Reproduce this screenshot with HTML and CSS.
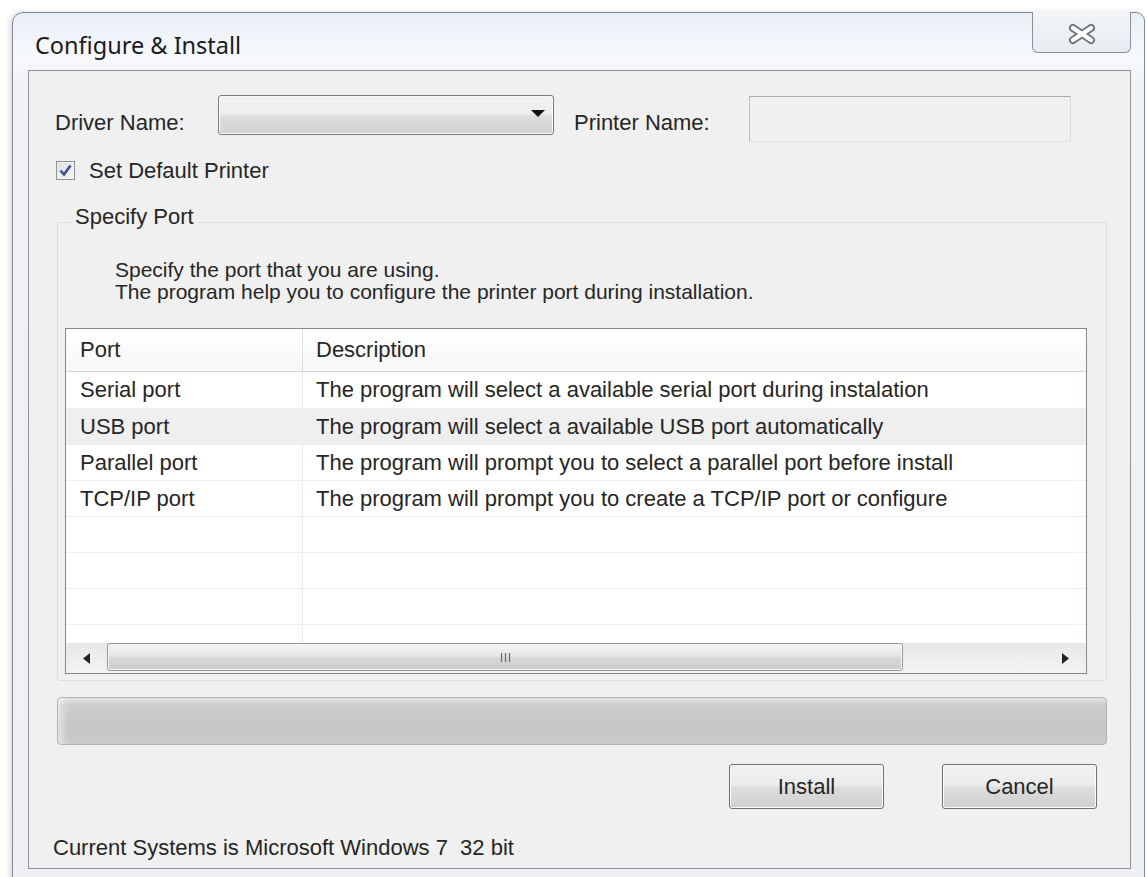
FILE: index.html
```html
<!DOCTYPE html>
<html lang="en">
<head>
<meta charset="utf-8">
<title>Configure &amp; Install</title>
<link rel="stylesheet" href="styles.css">
</head>
<body>
<div class="window">
  <div class="titlebar">
    <span class="title">Configure &amp; Install</span>
    <button class="close" type="button" aria-label="Close">
      <svg width="30" height="22" viewBox="0 0 30 22">
        <path d="M6 5 L24 17 M24 5 L6 17" stroke="#6f747a" stroke-width="8" stroke-linecap="round" fill="none"/>
        <path d="M6 5 L24 17 M24 5 L6 17" stroke="#fdfdfd" stroke-width="4.4" stroke-linecap="round" fill="none"/>
      </svg>
    </button>
  </div>

  <div class="client">
    <div class="names-row">
      <span class="label driver-label">Driver Name:</span>
      <div class="combo">
        <svg class="combo-arrow" width="14" height="7" viewBox="0 0 14 7"><path d="M0 0 H14 L7 7 Z" fill="#111"/></svg>
      </div>
      <span class="label printer-label">Printer Name:</span>
      <div class="textfield"></div>
    </div>

    <label class="check-row">
      <span class="checkbox">
        <svg width="15" height="15" viewBox="0 0 15 15"><path d="M2.5 7.5 L6 11.5 L12.5 2.5" stroke="#3f4f8c" stroke-width="2.6" fill="none"/></svg>
      </span>
      <span class="check-text">Set Default Printer</span>
    </label>

    <fieldset class="group">
      <legend>Specify Port</legend>
      <p class="intro">Specify the port that you are using.<br>The program help you to configure the printer port during installation.</p>
      <div class="listview">
        <div class="lv-head">
          <div class="cell c1">Port</div>
          <div class="cell c2">Description</div>
        </div>
        <div class="lv-row first">
          <div class="cell c1">Serial port</div>
          <div class="cell c2">The program will select a available serial port during instalation</div>
        </div>
        <div class="lv-row alt">
          <div class="cell c1">USB port</div>
          <div class="cell c2">The program will select a available USB port automatically</div>
        </div>
        <div class="lv-row">
          <div class="cell c1">Parallel port</div>
          <div class="cell c2">The program will prompt you to select a parallel port before install</div>
        </div>
        <div class="lv-row">
          <div class="cell c1">TCP/IP port</div>
          <div class="cell c2">The program will prompt you to create a TCP/IP port or configure</div>
        </div>
        <div class="lv-row"><div class="cell c1"></div><div class="cell c2"></div></div>
        <div class="lv-row"><div class="cell c1"></div><div class="cell c2"></div></div>
        <div class="lv-row"><div class="cell c1"></div><div class="cell c2"></div></div>
        <div class="lv-row filler"><div class="cell c1"></div><div class="cell c2"></div></div>
        <div class="hscroll">
          <div class="sb-btn">
            <svg width="7" height="11" viewBox="0 0 7 11"><path d="M7 0 V11 L0 5.5 Z" fill="#222"/></svg>
          </div>
          <div class="sb-thumb">
            <svg width="11" height="9" viewBox="0 0 11 9"><path d="M1.5 0 V9 M5.5 0 V9 M9.5 0 V9" stroke="#6a6a6a" stroke-width="1.2"/></svg>
          </div>
          <div class="sb-track"></div>
          <div class="sb-btn">
            <svg width="7" height="11" viewBox="0 0 7 11"><path d="M0 0 V11 L7 5.5 Z" fill="#222"/></svg>
          </div>
        </div>
      </div>
    </fieldset>

    <div class="progress"></div>

    <div class="buttons">
      <button class="btn" type="button">Install</button>
      <button class="btn" type="button">Cancel</button>
    </div>

    <div class="status">Current Systems is Microsoft Windows 7&nbsp; 32 bit</div>
  </div>
</div>
</body>
</html>
```

FILE: styles.css
```css
html, body {
  margin: 0;
  padding: 0;
}

body {
  width: 1147px;
  height: 877px;
  overflow: hidden;
  background: #ffffff;
  font-family: "Liberation Sans", Arial, sans-serif;
  font-size: 22px;
  color: #262626;
}

/* Dialog frame */
.window {
  box-sizing: border-box;
  width: 1133px;
  height: 890px;
  margin: 12px 0 0 12px;
  padding: 0 13px 0 15px;
  border: 1px solid #7f8893;
  border-radius: 11px 9px 0 0;
  background: linear-gradient(to bottom, #e9f0f7 0, #f7f9fc 45px, #f0f2f5 70px, #eef0f3 100%);
  box-shadow: -3px 0 5px rgba(0, 0, 0, 0.12);
}

.titlebar {
  display: flex;
  justify-content: space-between;
  align-items: flex-start;
  height: 57px;
}

.title {
  margin: 18px 0 0 7px;
  font-family: "Noto Sans", "Open Sans", sans-serif;
  font-size: 23.5px;
  line-height: 28px;
  color: #1b1b1b;
}

.close {
  box-sizing: border-box;
  width: 99px;
  height: 41px;
  margin-top: -1px;
  padding: 4px 0 0;
  border: 1px solid #8b9097;
  border-top: none;
  border-radius: 0 0 6px 6px;
  background: linear-gradient(to bottom, #f3f5f8, #e8ecf1);
  display: flex;
  align-items: center;
  justify-content: center;
}

/* Client area */
.client {
  background: #f0f0f0;
  border: 1px solid #8e949b;
  padding: 24px 23px 9px 28px;
}

.names-row {
  display: flex;
  align-items: flex-start;
}

.label {
  line-height: 24px;
  margin-top: 16px;
  white-space: nowrap;
}

.driver-label {
  width: 163px;
  margin-left: -2px;
}

.combo {
  box-sizing: border-box;
  width: 336px;
  height: 40px;
  border: 1px solid #7a7a7a;
  border-radius: 3px;
  background: linear-gradient(to bottom, #f3f3f3 0, #ececec 48%, #dedede 52%, #d2d2d2 100%);
  box-shadow: inset 0 0 0 1px #fafafa;
  display: flex;
  align-items: center;
  justify-content: flex-end;
  padding-right: 8px;
}

.combo-arrow {
  margin-top: -3px;
}

.printer-label {
  width: 175px;
  margin-left: 20px;
}

.textfield {
  box-sizing: border-box;
  width: 322px;
  height: 46px;
  margin-top: 1px;
  border: 1px solid;
  border-color: #a9a9a9 #dadada #e2e2e2 #bcbcbc;
  background: #f0f0f0;
}

.check-row {
  display: flex;
  align-items: center;
  height: 19px;
  margin: 19px 0 0 -1px;
}

.checkbox {
  box-sizing: border-box;
  width: 19px;
  height: 19px;
  border: 1px solid #8e8f8f;
  background: linear-gradient(135deg, #dcdfe6, #f6f7f9);
  box-shadow: inset 0 0 0 1px #f4f4f4;
  display: flex;
  align-items: center;
  justify-content: center;
}

.check-text {
  margin-left: 14px;
  line-height: 22px;
}

/* Group box */
.group {
  margin: 27px 0 0;
  padding: 0 19px 6px 7px;
  border: 1px solid #d5dfe5;
  border-radius: 3px;
  min-width: 0;
}

.group legend {
  margin-left: 7px;
  padding: 0 3px 10px;
  line-height: 20px;
}

.intro {
  margin: 22px 0 25px;
  padding-left: 50px;
  font-size: 21px;
  line-height: 22px;
}

/* List view */
.listview {
  box-sizing: border-box;
  width: 1022px;
  height: 346px;
  border: 1px solid #828790;
  background: #ffffff;
  display: flex;
  flex-direction: column;
}

.lv-head,
.lv-row {
  display: grid;
  grid-template-columns: 237px 1fr;
}

.lv-head {
  height: 43px;
  box-sizing: border-box;
  border-bottom: 1px solid #d6d6d6;
  background: linear-gradient(to bottom, #ffffff, #f6f7f8);
}

.lv-row {
  height: 36px;
  box-sizing: border-box;
  border-bottom: 1px solid #efefef;
}

.lv-row.first {
  height: 37px;
}

.lv-row.alt {
  background: #efefef;
}

.lv-row.filler {
  flex: 1;
  height: auto;
  border-bottom: none;
}

.cell {
  display: flex;
  align-items: center;
  white-space: nowrap;
}

.c1 {
  padding-left: 14px;
  border-right: 1px solid #ececec;
}

.lv-head .c1 {
  border-right-color: #e0e0e0;
}

.c2 {
  padding-left: 13px;
}

/* Horizontal scroll bar */
.hscroll {
  height: 30px;
  flex: none;
  display: flex;
  background: linear-gradient(to bottom, #e8e8e8, #f3f3f3);
}

.sb-btn {
  width: 41px;
  display: flex;
  align-items: center;
  justify-content: center;
}

.sb-thumb {
  box-sizing: border-box;
  width: 796px;
  height: 28px;
  border: 1px solid #979797;
  border-radius: 3px;
  background: linear-gradient(to bottom, #f6f6f6 0, #e6e6e6 45%, #d6d6d6 55%, #cdcdcd 100%);
  box-shadow: inset 0 0 0 1px #f5f5f5;
  display: flex;
  align-items: center;
  justify-content: center;
}

.sb-track {
  flex: 1;
}

/* Progress bar */
.progress {
  box-sizing: border-box;
  height: 48px;
  margin-top: 16px;
  border: 1px solid #b3b3b3;
  border-radius: 4px;
  background: linear-gradient(to bottom, #e2e2e2 0, #cdcdcd 7px, #c6c6c6 60%, #c9c9c9 100%);
  box-shadow: inset 12px 0 10px -8px rgba(255, 255, 255, 0.6);
}

/* Command buttons */
.buttons {
  display: flex;
  justify-content: flex-end;
  gap: 58px;
  margin: 19px 10px 0 0;
}

.btn {
  box-sizing: border-box;
  width: 155px;
  height: 45px;
  border: 1px solid #707070;
  border-radius: 3px;
  background: linear-gradient(to bottom, #f2f2f2 0, #ebebeb 48%, #dddddd 52%, #cfcfcf 100%);
  box-shadow: inset 0 0 0 1px #fbfbfb;
  font-family: inherit;
  font-size: 22px;
  color: #262626;
  padding: 0;
}

.status {
  margin: 28px 0 0 -4px;
  line-height: 22px;
}
```
